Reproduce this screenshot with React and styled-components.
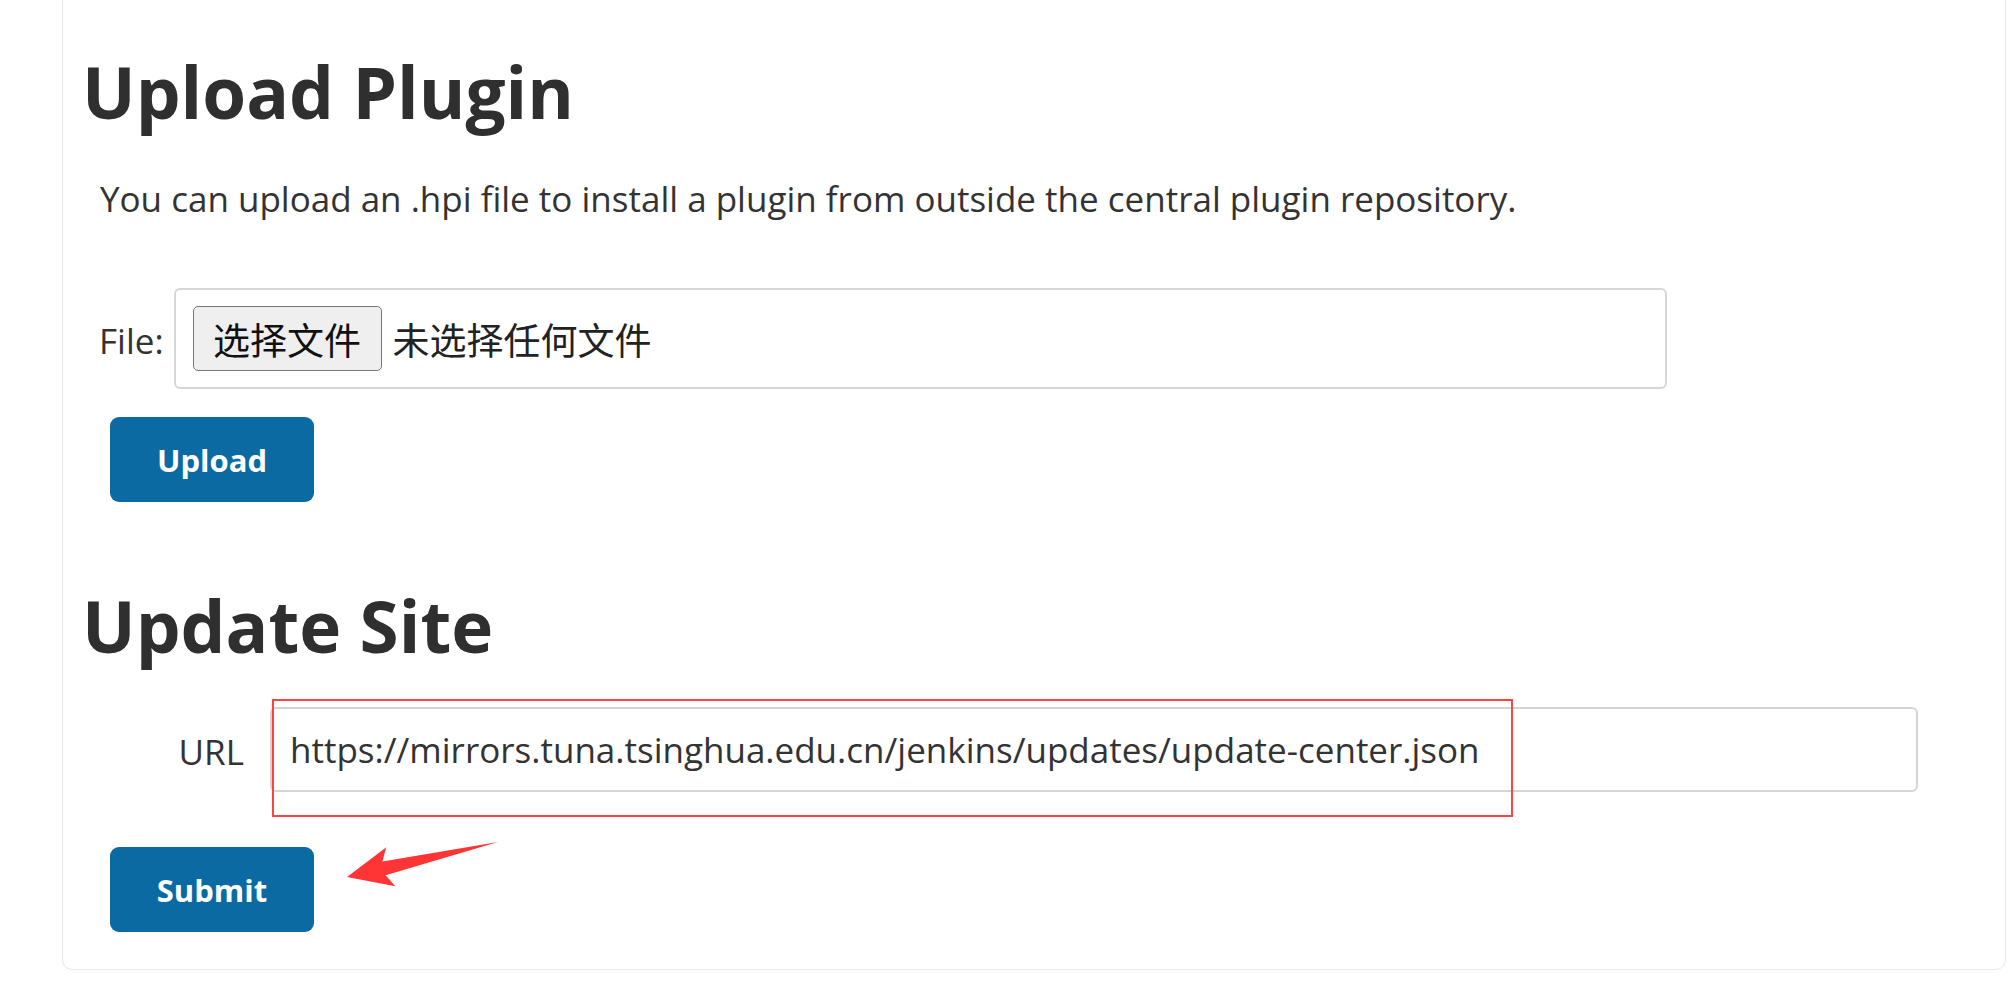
import React from "react";
import styled, { createGlobalStyle } from "styled-components";

const GlobalStyle = createGlobalStyle`
  html, body {
    margin: 0;
    padding: 0;
    background: #fff;
    overflow: hidden;
  }
  body {
    font-family: "Open Sans", "Noto Sans CJK SC", sans-serif;
    color: #333;
  }
`;

const Page = styled.div`
  width: 2007px;
  height: 989px;
`;

const Card = styled.div`
  position: relative;
  margin-left: 62px;
  width: 1944px;
  box-sizing: border-box;
  border: 1px solid #e6eaed;
  border-top: none;
  border-radius: 0 0 10px 10px;
  padding: 42px 0 37px 19px;
`;

const Title = styled.h1`
  margin: ${(p) => p.$mt || 0}px 0 0 0;
  font-size: 71px;
  line-height: 100px;
  font-weight: 700;
  color: #2f2f2f;
`;

const Intro = styled.p`
  margin: 34px 0 0 18px;
  font-size: 35px;
  line-height: 46px;
  color: #333;
  white-space: nowrap;
`;

const FileRow = styled.div`
  display: flex;
  align-items: center;
  gap: 10px;
  margin: 66px 0 0 17px;
`;

const Label = styled.span`
  font-size: 35px;
  line-height: 46px;
  padding-top: 4px;
  color: #333;
  width: ${(p) => p.$w}px;
  text-align: ${(p) => p.$align || "left"};
`;

const FileBox = styled.div`
  display: flex;
  align-items: center;
  gap: 11px;
  width: 1493px;
  height: 101px;
  box-sizing: border-box;
  border: 2px solid #d6d6d6;
  border-radius: 6px;
  padding: 0 17px;
  font-family: "Noto Sans CJK SC", sans-serif;
  font-size: 37px;
  color: #222;
`;

const ChooseButton = styled.button`
  width: 189px;
  height: 65px;
  box-sizing: border-box;
  border: 1.5px solid #777;
  border-radius: 5px;
  background: #efefef;
  font-family: "Noto Sans CJK SC", sans-serif;
  font-size: 37px;
  color: #111;
  padding: 0;
`;

const ActionRow = styled.div`
  position: relative;
  margin: ${(p) => p.$mt}px 0 0 28px;
`;

const PrimaryButton = styled.button`
  width: 204px;
  height: 85px;
  border: none;
  border-radius: 9px;
  background: #0b6aa2;
  color: #fff;
  font-family: "Open Sans", sans-serif;
  font-weight: 700;
  font-size: 31px;
  padding: 0;
`;

const UrlRow = styled.div`
  position: relative;
  display: flex;
  align-items: center;
  gap: 26px;
  margin-top: 31px;
`;

const UrlInput = styled.div`
  width: 1648px;
  height: 85px;
  box-sizing: border-box;
  border: 2px solid #d4d4d4;
  border-radius: 6px;
  padding: 0 18px;
  display: flex;
  align-items: center;
  font-size: 35px;
  color: #333;
`;

const Highlight = styled.div`
  position: absolute;
  left: 190px;
  top: -8px;
  width: 1241px;
  height: 118px;
  box-sizing: border-box;
  border: 2px solid #ff4343;
  pointer-events: none;
`;

const Arrow = styled.svg`
  position: absolute;
  left: 235px;
  top: -9px;
`;

export default function App() {
  return (
    <Page>
      <GlobalStyle />
      <Card>
        <Title>Upload Plugin</Title>
        <Intro>
          You can upload an .hpi file to install a plugin from outside the central plugin repository.
        </Intro>
        <FileRow>
          <Label>File:</Label>
          <FileBox>
            <ChooseButton>选择文件</ChooseButton>
            <span>未选择任何文件</span>
          </FileBox>
        </FileRow>
        <ActionRow $mt={28}>
          <PrimaryButton>Upload</PrimaryButton>
        </ActionRow>

        <Title $mt={74}>Update Site</Title>
        <UrlRow>
          <Label $w={162} $align="right">URL</Label>
          <UrlInput>https://mirrors.tuna.tsinghua.edu.cn/jenkins/updates/update-center.json</UrlInput>
          <Highlight />
        </UrlRow>
        <ActionRow $mt={55}>
          <PrimaryButton>Submit</PrimaryButton>
          <Arrow width="156" height="52" viewBox="0 0 156 52">
            <polygon
              points="2,39 41.3,9.3 37.4,23.6 153,4 40.6,37.2 50.3,48.3"
              fill="#ff3434"
            />
          </Arrow>
        </ActionRow>
      </Card>
    </Page>
  );
}
